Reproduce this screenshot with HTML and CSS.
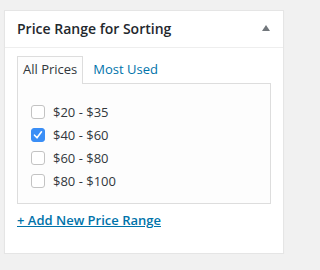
FILE: index.html
```html
<!DOCTYPE html>
<html>
<head>
<meta charset="utf-8">
<link rel="stylesheet" href="styles.css">
</head>
<body>
<div class="postbox">
  <h2 class="hndle"><span>Price Range for Sorting</span><span class="toggle"></span></h2>
  <div class="inside">
    <ul class="tabs">
      <li class="tab active">All Prices</li>
      <li class="tab"><a href="#">Most Used</a></li>
    </ul>
    <div class="panel">
      <ul class="checklist">
        <li><label><input type="checkbox" class="cb"><span>$20 - $35</span></label></li>
        <li><label><input type="checkbox" class="cb" checked><span>$40 - $60</span></label></li>
        <li><label><input type="checkbox" class="cb"><span>$60 - $80</span></label></li>
        <li><label><input type="checkbox" class="cb"><span>$80 - $100</span></label></li>
      </ul>
    </div>
    <p class="adder"><a href="#">+ Add New Price Range</a></p>
  </div>
</div>
</body>
</html>
```
FILE: styles.css
```css
html, body {
  margin: 0;
  background: #f1f1f1;
}
body {
  padding: 10px 0 0 4px;
  font-family: "Open Sans", "Noto Sans", sans-serif;
  color: #32373c;
}
.postbox {
  width: 278px;
  background: #fff;
  border: 1px solid #e5e5e5;
  box-shadow: 0 1px 1px rgba(0,0,0,.04);
}
.hndle {
  margin: 0;
  display: flex;
  justify-content: space-between;
  align-items: center;
  padding: 8px 13px 8px 12px;
  font-size: 14px;
  line-height: 20px;
  font-weight: 600;
  color: #23282d;
  border-bottom: 1px solid #eee;
}
.toggle {
  width: 0;
  height: 0;
  border-left: 4px solid transparent;
  border-right: 4px solid transparent;
  border-bottom: 6px solid #72777c;
  margin-top: -2px;
}
.inside {
  padding: 8px 12px 23px 12px;
}
.tabs {
  list-style: none;
  margin: 0;
  padding: 0;
  display: flex;
  gap: 4px;
  position: relative;
  z-index: 1;
}
.tab {
  font-size: 13px;
  line-height: 19px;
  padding: 3px 5px 5px;
  border: 1px solid transparent;
  border-bottom: none;
  margin-bottom: -1px;
}
.tab.active {
  border-color: #ddd;
  background: #fdfdfd;
  color: #32373c;
}
.tab a {
  color: #0073aa;
  text-decoration: none;
}
.panel {
  border: 1px solid #ddd;
  background: #fdfdfd;
  padding: 16px 13px 11px;
}
.checklist {
  list-style: none;
  margin: 0;
  padding: 0;
}
.checklist li {
  height: 23px;
  display: flex;
  align-items: center;
}
.checklist label {
  display: flex;
  align-items: center;
  gap: 8px;
  font-size: 13px;
  line-height: 18px;
  color: #32373c;
}
.cb {
  appearance: none;
  -webkit-appearance: none;
  margin: 0;
  width: 14px;
  height: 14px;
  border: 1px solid #c3c3c3;
  border-radius: 3px;
  background: #fff;
  box-sizing: border-box;
}
.cb:checked {
  background: #3a8ef6 url("data:image/svg+xml,%3Csvg xmlns='http://www.w3.org/2000/svg' viewBox='0 0 14 14'%3E%3Cpath d='M3.5 7.2 L6 9.8 L10.5 3.8' fill='none' stroke='white' stroke-width='1.6' stroke-linecap='round' stroke-linejoin='round'/%3E%3C/svg%3E") center/14px 14px no-repeat;
  border-color: #3a8ef6;
}
.adder {
  margin: 6px 0 0;
  font-size: 13px;
  line-height: 20px;
  font-weight: 600;
}
.adder a {
  color: #0073aa;
  text-decoration: underline;
}
```
